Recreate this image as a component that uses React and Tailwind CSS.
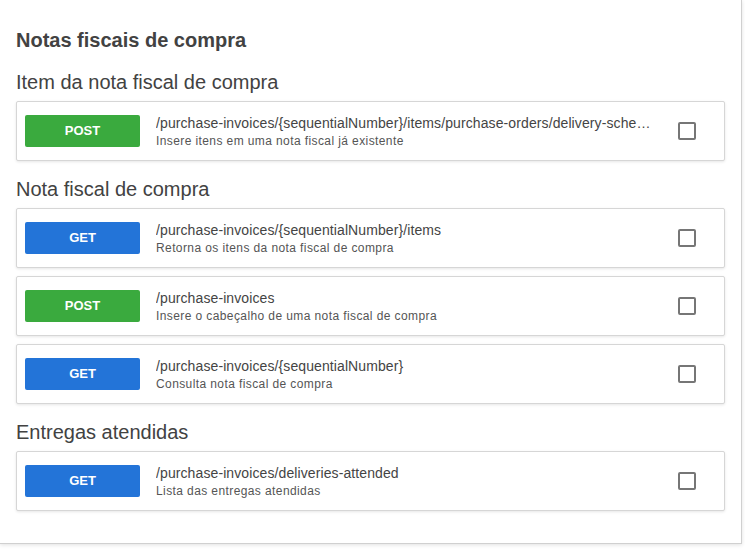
import React from 'react'

const secoes = [
  {
    titulo: 'Item da nota fiscal de compra',
    endpoints: [
      {
        metodo: 'POST',
        caminho: '/purchase-invoices/{sequentialNumber}/items/purchase-orders/delivery-schedules',
        descricao: 'Insere itens em uma nota fiscal já existente'
      }
    ]
  },
  {
    titulo: 'Nota fiscal de compra',
    endpoints: [
      {
        metodo: 'GET',
        caminho: '/purchase-invoices/{sequentialNumber}/items',
        descricao: 'Retorna os itens da nota fiscal de compra'
      },
      {
        metodo: 'POST',
        caminho: '/purchase-invoices',
        descricao: 'Insere o cabeçalho de uma nota fiscal de compra'
      },
      {
        metodo: 'GET',
        caminho: '/purchase-invoices/{sequentialNumber}',
        descricao: 'Consulta nota fiscal de compra'
      }
    ]
  },
  {
    titulo: 'Entregas atendidas',
    endpoints: [
      {
        metodo: 'GET',
        caminho: '/purchase-invoices/deliveries-attended',
        descricao: 'Lista das entregas atendidas'
      }
    ]
  }
]

function EndpointRow({ endpoint }) {
  const cor = endpoint.metodo === 'POST' ? 'bg-[#3aaa3e]' : 'bg-[#2374d8]'
  return (
    <div className="h-[60px] flex items-center bg-white border border-[#d6d6d6] rounded-[2px] shadow-[0_1px_3px_rgba(0,0,0,0.1)] pl-2">
      {/* Botão do método HTTP */}
      <div className={`${cor} w-[115px] h-8 shrink-0 rounded-[2px] flex items-center justify-center text-white font-bold text-[13px]`}>
        {endpoint.metodo}
      </div>
      <div className="flex-1 min-w-0 ml-4 mr-6">
        <p className="text-[14px] leading-5 tracking-[0.1px] text-[#444] truncate">{endpoint.caminho}</p>
        <p className="text-[12px] leading-4 tracking-[0.4px] text-[#555] truncate">{endpoint.descricao}</p>
      </div>
      <div className="w-[18px] h-[18px] shrink-0 border-2 border-[#767676] rounded-[2px] mr-[28px]" />
    </div>
  )
}

export default function App() {
  return (
    <div className="min-h-screen bg-white font-['Liberation_Sans',Arial,sans-serif]">
      <div className="w-[742px] bg-white border-r border-b border-[#d0d0d0] shadow-[0_1px_4px_rgba(0,0,0,0.12)] px-4 pt-[26px] pb-8">
        <h2 className="text-[20px] leading-7 font-bold text-[#424242]">Notas fiscais de compra</h2>
        {secoes.map(s => (
          <div key={s.titulo} className="mt-4">
            <h3 className="text-[20px] leading-6 text-[#424242] mb-[7px]">{s.titulo}</h3>
            <div className="flex flex-col gap-2">
              {s.endpoints.map(e => (
                <EndpointRow key={e.metodo + e.caminho} endpoint={e} />
              ))}
            </div>
          </div>
        ))}
      </div>
    </div>
  )
}
